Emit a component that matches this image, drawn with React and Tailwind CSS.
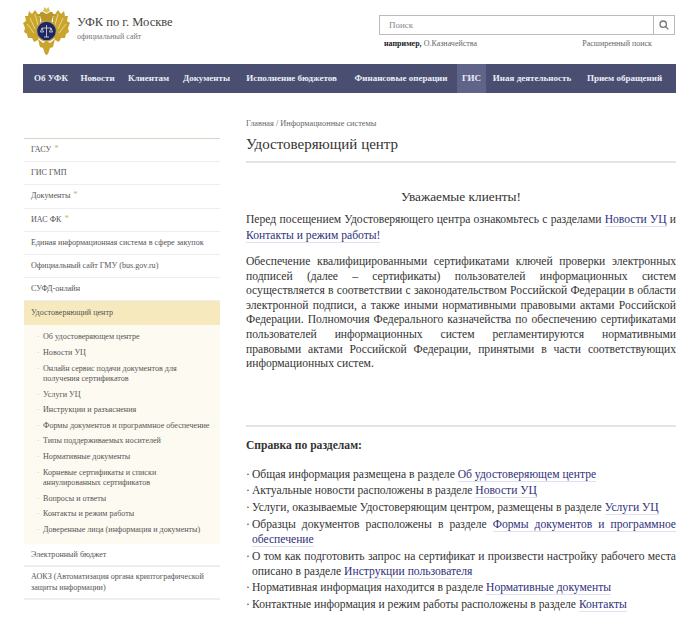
const navItems = [
  { label: 'Об УФК', w: 'w-[56px]' },
  { label: 'Новости', w: 'w-[37px]' },
  { label: 'Клиентам', w: 'w-[65px]' },
  { label: 'Документы', w: 'w-[51px]' },
  { label: 'Исполнение бюджетов', w: 'w-[119px]' },
  { label: 'Финансовые операции', w: 'w-[100px]' },
  { label: 'ГИС', w: 'w-[29px] ml-[6px]', active: true },
  { label: 'Иная деятельность', w: 'w-[92px]' },
  { label: 'Прием обращений', w: 'w-[93px]' },
];

const sideTop = [
  { label: 'ГАСУ', star: true },
  { label: 'ГИС ГМП' },
  { label: 'Документы', star: true },
  { label: 'ИАС ФК', star: true },
  { label: 'Единая информационная система в сфере закупок' },
  { label: 'Официальный сайт ГМУ (bus.gov.ru)' },
  { label: 'СУФД-онлайн' },
];

const subItems = [
  'Об удостоверяющем центре',
  'Новости УЦ',
  'Онлайн сервис подачи документов для получения сертификатов',
  'Услуги УЦ',
  'Инструкции и разъяснения',
  'Формы документов и программное обеспечение',
  'Типы поддерживаемых носителей',
  'Нормативные документы',
  'Корневые сертификаты и списки аннулированных сертификатов',
  'Вопросы и ответы',
  'Контакты и режим работы',
  'Доверенные лица (информация и документы)',
];

const helpItems = [
  ['Общая информация размещена в разделе ', 'Об удостоверяющем центре'],
  ['Актуальные новости расположены в разделе ', 'Новости УЦ'],
  ['Услуги, оказываемые Удостоверяющим центром, размещены в разделе ', 'Услуги УЦ'],
  ['Образцы документов расположены в разделе ', 'Формы документов и программное обеспечение'],
  ['О том как подготовить запрос на сертификат и произвести настройку рабочего места описано в разделе ', 'Инструкции пользователя'],
  ['Нормативная информация находится в разделе ', 'Нормативные документы'],
  ['Контактные информация и режим работы расположены в разделе ', 'Контакты'],
];

function Emblem() {
  return (
    <svg width="47" height="50" viewBox="0 0 47 50" className="shrink-0">
      {/* wings */}
      <g fill="#c9a52e">
        <path d="M17 12 L12 5 L9 9 L6 6 L5 11 L2 11 L3 16 L0 18 L2 23 L1 27 L4 29 L5 33 L9 33 L11 37 L15 35 L17 26 Z" />
        <path d="M30 12 L35 5 L38 9 L41 6 L42 11 L45 11 L44 16 L47 18 L45 23 L46 27 L43 29 L42 33 L38 33 L36 37 L32 35 L30 26 Z" />
      </g>
      <path d="M7 13 L12 24 M4 19 L11 28 M12 9 L15 20 M40 13 L35 24 M43 19 L36 28 M35 9 L32 20" stroke="#e8d68a" strokeWidth="1" fill="none" />
      {/* necks, heads and crown */}
      <path d="M19 18 L17 11 C16 8 18 6 20 7 L23.5 9 L27 7 C29 6 31 8 30 11 L28 18 Z" fill="#b8962a" />
      <path d="M20 6 L21.5 2 L23.5 4 L25.5 2 L27 6 L23.5 8 Z" fill="#dcc25a" />
      <path d="M17 9 L13 10 L17 11 Z M30 9 L34 10 L30 11 Z" fill="#a58522" />
      {/* tail */}
      <path d="M15 34 L20 38 L23.5 36 L27 38 L32 34 L30 42 L27 43 L25 49 L23.5 50 L22 49 L20 43 L17 42 Z" fill="#c9a52e" />
      {/* shield */}
      <circle cx="23.5" cy="26" r="10" fill="#1e2766" stroke="#bfa043" strokeWidth="1.4" />
      <path d="M23.5 20 V32 M19 23 H28 M19 23 L17.5 27 H20.5 Z M28 23 L26.5 27 H29.5 Z M21 32 H26" stroke="#e6e2d0" strokeWidth="0.8" fill="none" />
    </svg>
  );
}

function Star() {
  return <span className="ml-[3px] text-[9px] leading-none text-[#c9b87a] align-top">*</span>;
}

export default function App() {
  return (
    <div className="w-[700px] h-[642px] overflow-hidden bg-white font-['Liberation_Serif',serif] text-[#333]">
      {/* Header */}
      <header className="flex justify-between pl-[23px] pr-[25px] h-[64px]">
        <div className="flex gap-[7px] pt-[5px]">
          <Emblem />
          <div className="pt-[8px]">
            <div className="text-[12.5px] leading-[18px] text-[#444]">УФК по г. Москве</div>
            <div className="text-[8px] leading-[10px] mt-[1px] text-[#777]">официальный сайт</div>
          </div>
        </div>
        <div className="w-[296px] pt-[15px]">
          <div className="flex h-[20px] border border-[#bbb]">
            <div className="flex-1 pl-[9px] text-[9px] leading-[18px] text-[#888]">Поиск</div>
            <div className="w-[21px] border-l border-[#bbb] flex items-center justify-center">
              <svg width="10" height="10" viewBox="0 0 10 10" fill="none" stroke="#777" strokeWidth="1.3">
                <circle cx="4.2" cy="4.2" r="3.2" />
                <path d="M6.6 6.6 L9.4 9.4" />
              </svg>
            </div>
          </div>
          <div className="flex justify-between text-[8px] leading-[12px] mt-[3px] pl-[5px] pr-[23px] text-[#666]">
            <span><span className="font-bold text-[#222]">например,</span> О.Казначейства</span>
            <span>Расширенный поиск</span>
          </div>
        </div>
      </header>

      {/* Nav */}
      <nav className="ml-[23px] w-[653px] h-[29px] bg-[#4a4f72] flex">
        {navItems.map((item) => (
          <div
            key={item.label}
            className={`${item.w} flex items-center justify-center text-[9px] font-bold whitespace-nowrap text-[#eceef5] ${item.active ? 'bg-[#5f6488]' : ''}`}
          >
            {item.label}
          </div>
        ))}
      </nav>

      <div className="flex mt-[45px] pl-[24px]">
        {/* Sidebar */}
        <aside className="w-[196px] shrink-0 border-t border-[#d8d4c4] text-[8.1px] text-[#555]">
          {sideTop.map((item) => (
            <div key={item.label} className="h-[23.2px] flex items-center px-[7px] border-b border-[#eee]">
              <span>{item.label}{item.star && <Star />}</span>
            </div>
          ))}
          <div className="h-[24px] flex items-center px-[7px] bg-[#f6e9bd]">Удостоверяющий центр</div>
          <ul className="bg-[#fdfaf1] pt-[7px] pb-[9px] pl-[19px] pr-[7px] flex flex-col gap-[5.1px]">
            {subItems.map((s) => (
              <li key={s} className="relative leading-[10.5px]">
                <span className="absolute left-[-6px] top-0 text-[#bbb]">·</span>
                {s}
              </li>
            ))}
          </ul>
          <div className="h-[23px] flex items-center px-[7px] border-b-2 border-[#eee]">Электронный бюджет</div>
          <div className="h-[33px] flex items-center px-[7px] border-b-2 border-[#eee] leading-[10.5px]">
            АОКЗ (Автоматизация органа криптографической защиты информации)
          </div>
        </aside>

        {/* Main */}
        <main className="ml-[26px] w-[430px] shrink-0 -mt-[20px]">
          <div className="text-[8.3px] leading-[12px] text-[#666]">Главная / Информационные системы</div>
          <h1 className="text-[15px] leading-[20px] text-[#333] mt-[4px] pb-[7px] border-b-2 border-[#e4e4e4]">Удостоверяющий центр</h1>
          <p className="text-center text-[13.3px] leading-[16px] mt-[26px]">Уважаемые клиенты!</p>
          <p className="text-[11.6px] leading-[15.5px] text-justify mt-[7px]">
            Перед посещением Удостоверяющего центра ознакомьтесь с разделами <a className="text-[#2f2f7a] border-b border-[#e0e0f0]">Новости УЦ</a> и <a className="text-[#2f2f7a] border-b border-[#e0e0f0]">Контакты и режим работы!</a>
          </p>
          <p className="text-[11.6px] leading-[14.6px] text-justify [text-align-last:justify] mt-[12px]">
            Обеспечение квалифицированными сертификатами ключей проверки электронных подписей (далее – сертификаты) пользователей информационных систем осуществляется в соответствии с законодательством Российской Федерации в области электронной подписи, а также иными нормативными правовыми актами Российской Федерации. Полномочия Федерального казначейства по обеспечению сертификатами пользователей информационных систем регламентируются нормативными<br />правовыми актами Российской Федерации, принятыми в части соответствующих
            <span className="block [text-align-last:left]">информационных систем.</span>
          </p>
          <div className="border-t-2 border-[#e4e4e4] mt-[53px]" />
          <p className="text-[11.6px] leading-[16px] font-bold mt-[11px]">Справка по разделам:</p>
          <ul className="mt-[13px] text-[11.6px] leading-[15px] flex flex-col gap-[1.7px]">
            {helpItems.map(([text, link]) => (
              <li key={link} className="relative pl-[6px] text-justify">
                <span className="absolute left-0 top-0">·</span>
                {text}<a className="text-[#2f2f7a] border-b border-[#e0e0f0]">{link}</a>
              </li>
            ))}
          </ul>
        </main>
      </div>
    </div>
  );
}
